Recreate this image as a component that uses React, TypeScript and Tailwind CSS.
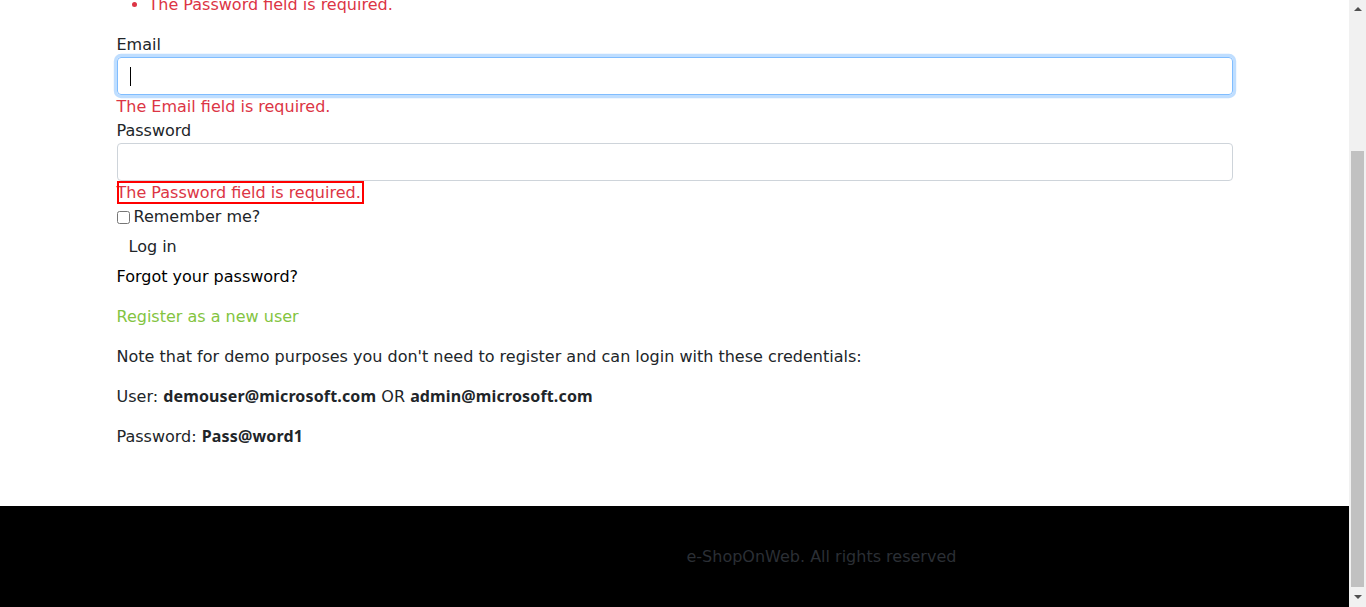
import { useLayoutEffect } from "react";

const font = "font-['DejaVu_Sans',sans-serif]";
const bold = "font-['Noto_Sans',sans-serif] font-bold leading-4 tracking-[0.15px]";

function FieldError({ children, boxed }: { children: string; boxed?: boolean }) {
  if (boxed) {
    return (
      <div className="h-6 leading-6">
        <span className="inline-block h-[23px] pr-[3px] align-top leading-[23px] text-[#dc3545] outline-2 -outline-offset-2 outline-[#ff0000]">
          {children}
        </span>
      </div>
    );
  }
  return <div className="h-6 leading-6 text-[#dc3545]">{children}</div>;
}

// the browser's scrollbar, drawn because the headless page hides it
function Scrollbar() {
  return (
    <div className="fixed top-0 right-0 flex h-full w-[17px] flex-col items-center bg-[#f1f1f1]">
      <div className="flex h-[17px] items-center justify-center">
        <div className="h-0 w-0 border-x-[4px] border-b-[4px] border-x-transparent border-b-[#505050]" />
      </div>
      <div className="mt-[134px] h-[436px] w-[13px] bg-[#c1c1c1]" />
      <div className="flex h-[20px] items-center justify-center">
        <div className="h-0 w-0 border-x-[4px] border-t-[4px] border-x-transparent border-t-[#505050]" />
      </div>
    </div>
  );
}

export default function App() {
  useLayoutEffect(() => {
    window.scrollTo(0, document.documentElement.scrollHeight);
  }, []);

  return (
    <div className={`${font} bg-white text-[16px] text-[#212529]`}>
      <div className="mr-[17px]">
        <header className="h-[64px] bg-black" />

        <main className="mx-auto max-w-[1140px] px-3 pt-4 pb-[41px]">
          <h2 className="h-[40px] text-[24px] leading-[40px]">Log in</h2>

          <ul className="mb-4 list-disc pl-8 leading-6 text-[#dc3545] marker:text-[#dc3545]">
            <li>The Email field is required.</li>
            <li>The Password field is required.</li>
          </ul>

          <label className="block h-6 leading-6">Email</label>
          <div className="relative">
            <input
              type="email"
              className="block h-[38px] w-full rounded border border-[#80bdff] px-3 shadow-[0_0_0_3.2px_rgba(0,123,255,0.25)] outline-none"
            />
            <div className="absolute top-[10px] left-[13px] h-[19px] w-px bg-black" />
          </div>
          <FieldError>The Email field is required.</FieldError>

          <label className="block h-6 leading-6">Password</label>
          <input type="password" className="block h-[38px] w-full rounded border border-[#ced4da] px-3 outline-none" />
          <FieldError boxed>The Password field is required.</FieldError>

          <div className="flex h-6 items-center">
            <input type="checkbox" className="m-0 mr-1 h-[13px] w-[13px]" />
            <span className="leading-6">Remember me?</span>
          </div>

          <button type="button" className="block h-9 px-3 leading-9">
            Log in
          </button>

          <p className="mb-4 h-6 leading-6 text-black">Forgot your password?</p>
          <p className="mb-4 h-6 leading-6 text-[#83c441]">Register as a new user</p>
          <p className="mb-4 h-6 leading-6">
            Note that for demo purposes you don't need to register and can login with these credentials:
          </p>
          <p className="mb-4 h-6 leading-6">
            User: <b className={bold}>demouser@microsoft.com</b> OR <b className={bold}>admin@microsoft.com</b>
          </p>
          <p className="mb-4 h-6 leading-6">
            Password: <b className={bold}>Pass@word1</b>
          </p>
        </main>

        <footer className="bg-black">
          <div className="mx-auto grid h-[101px] max-w-[1140px] grid-cols-2 items-center">
            <div />
            <p className="px-3 text-[#2b2f35]">e-ShopOnWeb. All rights reserved</p>
          </div>
        </footer>
      </div>
      <Scrollbar />
    </div>
  );
}
